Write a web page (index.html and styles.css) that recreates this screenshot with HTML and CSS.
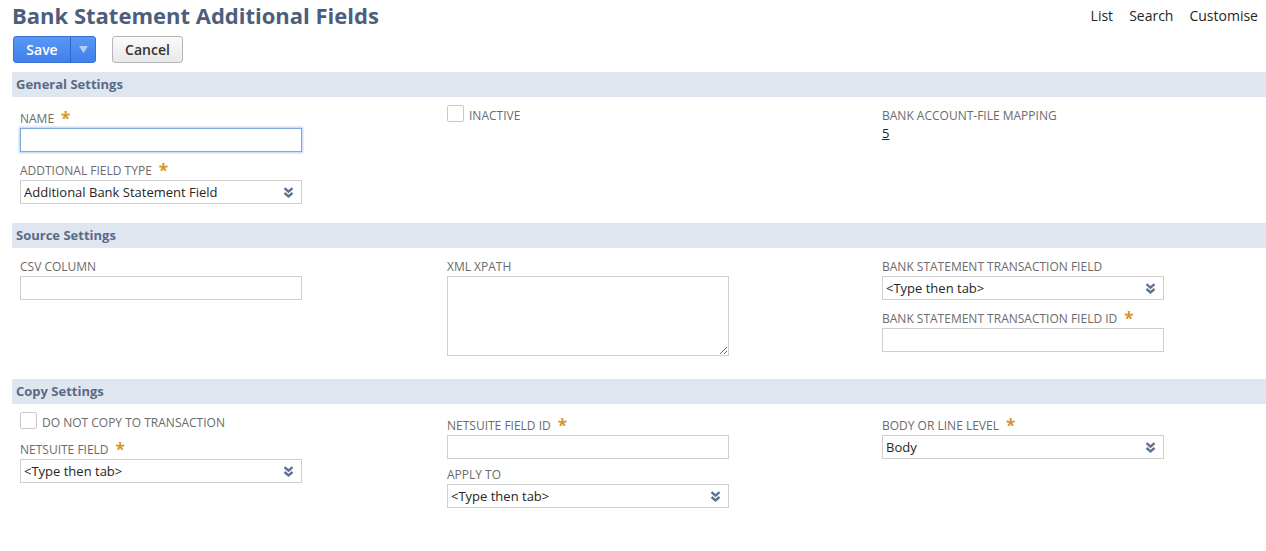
FILE: index.html
```html
<!DOCTYPE html>
<html lang="en">
<head>
    <meta charset="UTF-8">
    <meta name="viewport" content="width=device-width, initial-scale=1.0">
    <title>Bank Statement Additional Fields</title>
    <link rel="stylesheet" href="styles.css">
</head>
<body>
<div class="page">
    <div class="page-header">
        <h1>Bank Statement Additional Fields</h1>
        <div class="page-links">
            <a href="#">List</a>
            <a href="#">Search</a>
            <a href="#">Customise</a>
        </div>
    </div>

    <div class="buttons">
        <div class="btn-save">
            <span class="save-main">Save</span>
            <span class="save-menu">
                <svg width="9" height="7" viewBox="0 0 9 7"><path d="M0 0 H9 L4.5 7 Z" fill="#b9cdf3"/></svg>
            </span>
        </div>
        <button class="btn-cancel">Cancel</button>
    </div>

    <!-- General -->
    <div class="section-title">General Settings</div>
    <div class="section-body">
        <div class="col">
            <div class="field">
                <label class="field-label required">NAME<span class="req">*</span></label>
                <input type="text" class="text-input focused">
            </div>
            <div class="field">
                <label class="field-label required">ADDTIONAL FIELD TYPE<span class="req">*</span></label>
                <div class="select">
                    <span>Additional Bank Statement Field</span>
                    <svg class="chevrons" width="11" height="11" viewBox="0 0 11 11"><path d="M1.5 1.2 L5.5 4.6 L9.5 1.2 M1.5 6 L5.5 9.4 L9.5 6" fill="none" stroke="#5d7292" stroke-width="2.4"/></svg>
                </div>
            </div>
        </div>
        <div class="col">
            <div class="check-row">
                <span class="checkbox"></span>
                <span class="check-label">INACTIVE</span>
            </div>
        </div>
        <div class="col">
            <div class="field">
                <label class="field-label">BANK ACCOUNT-FILE MAPPING</label>
                <a href="#" class="field-value">5</a>
            </div>
        </div>
    </div>

    <!-- Source -->
    <div class="section-title">Source Settings</div>
    <div class="section-body">
        <div class="col">
            <div class="field">
                <label class="field-label">CSV COLUMN</label>
                <input type="text" class="text-input">
            </div>
        </div>
        <div class="col">
            <div class="field">
                <label class="field-label">XML XPATH</label>
                <textarea class="text-area"></textarea>
            </div>
        </div>
        <div class="col">
            <div class="field">
                <label class="field-label">BANK STATEMENT TRANSACTION FIELD</label>
                <div class="select">
                    <span>&lt;Type then tab&gt;</span>
                    <svg class="chevrons" width="11" height="11" viewBox="0 0 11 11"><path d="M1.5 1.2 L5.5 4.6 L9.5 1.2 M1.5 6 L5.5 9.4 L9.5 6" fill="none" stroke="#5d7292" stroke-width="2.4"/></svg>
                </div>
            </div>
            <div class="field">
                <label class="field-label required">BANK STATEMENT TRANSACTION FIELD ID<span class="req">*</span></label>
                <input type="text" class="text-input">
            </div>
        </div>
    </div>

    <!-- Copy -->
    <div class="section-title">Copy Settings</div>
    <div class="section-body">
        <div class="col">
            <div class="check-row">
                <span class="checkbox"></span>
                <span class="check-label">DO NOT COPY TO TRANSACTION</span>
            </div>
            <div class="field">
                <label class="field-label required">NETSUITE FIELD<span class="req">*</span></label>
                <div class="select">
                    <span>&lt;Type then tab&gt;</span>
                    <svg class="chevrons" width="11" height="11" viewBox="0 0 11 11"><path d="M1.5 1.2 L5.5 4.6 L9.5 1.2 M1.5 6 L5.5 9.4 L9.5 6" fill="none" stroke="#5d7292" stroke-width="2.4"/></svg>
                </div>
            </div>
        </div>
        <div class="col">
            <div class="field">
                <label class="field-label required">NETSUITE FIELD ID<span class="req">*</span></label>
                <input type="text" class="text-input">
            </div>
            <div class="field">
                <label class="field-label">APPLY TO</label>
                <div class="select">
                    <span>&lt;Type then tab&gt;</span>
                    <svg class="chevrons" width="11" height="11" viewBox="0 0 11 11"><path d="M1.5 1.2 L5.5 4.6 L9.5 1.2 M1.5 6 L5.5 9.4 L9.5 6" fill="none" stroke="#5d7292" stroke-width="2.4"/></svg>
                </div>
            </div>
        </div>
        <div class="col">
            <div class="field">
                <label class="field-label required">BODY OR LINE LEVEL<span class="req">*</span></label>
                <div class="select">
                    <span>Body</span>
                    <svg class="chevrons" width="11" height="11" viewBox="0 0 11 11"><path d="M1.5 1.2 L5.5 4.6 L9.5 1.2 M1.5 6 L5.5 9.4 L9.5 6" fill="none" stroke="#5d7292" stroke-width="2.4"/></svg>
                </div>
            </div>
        </div>
    </div>
</div>
</body>
</html>
```

FILE: styles.css
```css
body {
    margin: 0;
    font-family: "Open Sans", "Liberation Sans", sans-serif;
    color: #262626;
    background-color: #fff;
}
.page {
    padding-left: 12px;
}
.page-header {
    display: flex;
    justify-content: space-between;
    align-items: flex-start;
}
h1 {
    margin: 0;
    font-size: 22px;
    line-height: 30px;
    font-weight: 700;
    color: #4d5e7c;
}
.page-links {
    display: flex;
    gap: 16px;
    padding-top: 6px;
    padding-right: 8px;
    font-size: 14px;
    line-height: 20px;
}
.page-links a {
    color: #262626;
    text-decoration: none;
}
.buttons {
    display: flex;
    gap: 16px;
    margin: 6px 0 9px 1px;
    height: 27px;
}
.btn-save {
    display: flex;
    box-sizing: border-box;
    width: 83px;
    border: 1px solid #3a70d2;
    border-radius: 3px;
    background: linear-gradient(#5898f5, #3f80ec);
}
.save-main {
    width: 56px;
    color: #fff;
    font-size: 14px;
    font-weight: 600;
    line-height: 25px;
    text-align: center;
}
.save-menu {
    flex: 1;
    display: flex;
    align-items: center;
    justify-content: center;
    border-left: 1px solid #3066c4;
}
.btn-cancel {
    width: 71px;
    height: 27px;
    padding: 0;
    border: 1px solid #b5b5b5;
    border-radius: 3px;
    background: linear-gradient(#fbfbfb, #e8e8e8);
    font-family: inherit;
    font-size: 14px;
    font-weight: 600;
    color: #333;
}
.section-title {
    height: 25px;
    line-height: 25px;
    padding-left: 4px;
    background-color: #e0e6ef;
    color: #5a6a87;
    font-size: 13px;
    font-weight: 700;
}
.section-body {
    display: grid;
    grid-template-columns: 427px 435px 1fr;
    padding: 11px 0 19px 8px;
}
.field + .field,
.check-row + .field {
    margin-top: 8px;
}
.field-label {
    display: block;
    margin-bottom: 1px;
    font-size: 12px;
    line-height: 16px;
    color: #6b6b6b;
}
.field-label.required {
    padding-top: 3px;
}
.req {
    margin-left: 7px;
    font-size: 17px;
    line-height: 0;
    font-weight: 700;
    color: #d4952b;
    vertical-align: -2px;
}
.field-value {
    display: block;
    font-size: 13px;
    line-height: 16px;
    color: #262626;
}
.text-input,
.select {
    display: block;
    box-sizing: border-box;
    width: 282px;
    height: 24px;
    margin: 0;
    border: 1px solid #cfcfcf;
    background-color: #fff;
    font-family: inherit;
    font-size: 13px;
}
.text-input.focused {
    border-color: #7fa7e4;
    box-shadow: 0 0 2px 1px #b6cdf2;
}
.select {
    display: flex;
    align-items: center;
    justify-content: space-between;
    padding: 0 7px 0 3px;
    color: #262626;
}
.text-area {
    display: block;
    box-sizing: border-box;
    width: 282px;
    height: 80px;
    margin: 0 0 4px 0;
    border: 1px solid #cfcfcf;
    font-family: inherit;
    resize: both;
}
.check-row {
    display: flex;
    align-items: flex-start;
    height: 16px;
}
.checkbox {
    box-sizing: border-box;
    width: 17px;
    height: 17px;
    margin-top: -3px;
    border: 1px solid #c9c9c9;
    border-radius: 2px;
    background-color: #fff;
}
.check-label {
    margin-left: 5px;
    font-size: 12px;
    line-height: 16px;
    color: #6b6b6b;
}
```
